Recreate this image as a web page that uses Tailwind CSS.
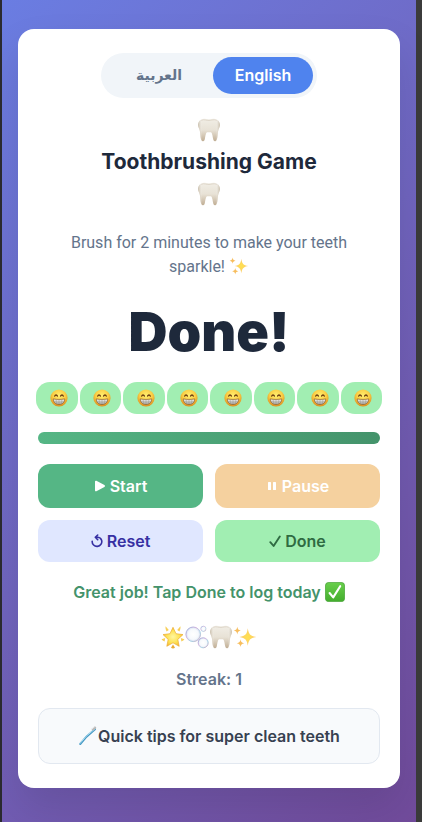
<!DOCTYPE html>
<html lang="en">
<head>
<meta charset="utf-8">
<meta name="viewport" content="width=device-width, initial-scale=1">
<title>Toothbrushing Game</title>
<script src="https://cdn.jsdelivr.net/npm/@tailwindcss/browser@4"></script>
</head>
<body class="min-h-screen bg-[#3b3b3b] font-['Inter','Noto_Sans',sans-serif] text-base text-[#1e293b]">
<svg class="absolute size-0" aria-hidden="true">
  <defs>
    <linearGradient id="gTooth" x1="0" y1="0" x2="0" y2="1"><stop offset="0" stop-color="#f1eee6"/><stop offset=".5" stop-color="#e8e2d6"/><stop offset="1" stop-color="#c0ad93"/></linearGradient>
    <linearGradient id="gToothEdge" x1="0" y1="0" x2="1" y2="0"><stop offset="0" stop-color="#b5a78f" stop-opacity=".75"/><stop offset=".2" stop-color="#fff" stop-opacity="0"/><stop offset=".8" stop-color="#fff" stop-opacity="0"/><stop offset="1" stop-color="#b5a78f" stop-opacity=".75"/></linearGradient>
    <radialGradient id="gFace" cx=".5" cy=".35" r=".65"><stop offset="0" stop-color="#ffee70"/><stop offset=".55" stop-color="#fbcf45"/><stop offset="1" stop-color="#dc8a1c"/></radialGradient>
    <linearGradient id="gTeeth" x1="0" y1="0" x2="0" y2="1"><stop offset="0" stop-color="#f4f4f4"/><stop offset="1" stop-color="#a9a6a0"/></linearGradient>
    <radialGradient id="gStar" cx=".5" cy=".5" r=".55"><stop offset="0" stop-color="#fff6a0"/><stop offset=".6" stop-color="#fde152"/><stop offset="1" stop-color="#f2b02e"/></radialGradient>
    <radialGradient id="gSpark" cx=".5" cy=".5" r=".5"><stop offset="0" stop-color="#ffe24e"/><stop offset="1" stop-color="#fbc86f"/></radialGradient>
    <radialGradient id="gBubble" cx=".5" cy=".5" r=".5"><stop offset="0" stop-color="#fff"/><stop offset=".7" stop-color="#f6f9fc"/><stop offset=".9" stop-color="#dfe5f3"/><stop offset="1" stop-color="#c8d4ea"/></radialGradient>
    <linearGradient id="gRing" x1="0" y1="0" x2="1" y2="1"><stop offset="0" stop-color="#90aeda"/><stop offset=".4" stop-color="#d7b3dd"/><stop offset=".65" stop-color="#a5d7e6"/><stop offset="1" stop-color="#d79bb8"/></linearGradient>
    <linearGradient id="gCheck" x1="0" y1="0" x2="0" y2="1"><stop offset="0" stop-color="#69cf4c"/><stop offset="1" stop-color="#43ad2d"/></linearGradient>
    <symbol id="tooth" viewBox="0 0 24 24">
      <path fill="url(#gTooth)" d="M6 .9C8.300.4 10 1.300 12 1.300S15.700.4 18 .9c3.100.6 5 2.900 4.900 6.100-.1 2.500-1.500 4.200-1.900 6.700-.5 3.100-.4 8.900-2.600 9.600-1.500.4-2-1-2.300-2.500-.5-2.700-1-6.100-2.200-6.500-.7-.3-1.400-.1-1.900-.1s-1.200-.2-1.900.1c-1.200.4-1.700 3.800-2.200 6.500-.3 1.500-.8 2.900-2.300 2.500C3.400 22.600 3.500 16.800 3 13.700 2.600 11.200 1.200 9.500 1.100 7 1 3.800 2.900 1.500 6 .9Z"/>
      <path fill="url(#gToothEdge)" d="M6 .9C8.300.4 10 1.300 12 1.300S15.700.4 18 .9c3.100.6 5 2.900 4.900 6.100-.1 2.500-1.500 4.200-1.900 6.700-.5 3.100-.4 8.900-2.600 9.600-1.500.4-2-1-2.300-2.500-.5-2.700-1-6.100-2.200-6.500-.7-.3-1.400-.1-1.900-.1s-1.200-.2-1.900.1c-1.200.4-1.700 3.800-2.200 6.500-.3 1.500-.8 2.900-2.300 2.500C3.400 22.600 3.500 16.800 3 13.700 2.600 11.200 1.200 9.500 1.100 7 1 3.800 2.900 1.500 6 .9Z"/>
      <path fill="none" stroke="#d8cfc0" stroke-width=".7" stroke-linecap="round" d="M4.500 2.200C7 1 9.500 2.600 12 2.500s5-1.500 7.500-.3"/>
    </symbol>
    <symbol id="grin" viewBox="0 0 18 18">
      <circle cx="9" cy="9" r="8.600" fill="url(#gFace)"/>
      <path fill="none" stroke="#6b3d12" stroke-width="1.300" stroke-linecap="round" d="M4.700 7.100c.5-1.500 2.100-1.500 2.700 0M10.600 7.100c.6-1.500 2.200-1.500 2.700 0"/>
      <path fill="url(#gTeeth)" stroke="#8d5b24" stroke-width=".7" d="M3.300 9.900c3.800.7 7.600.7 11.400 0 .2 3.400-2.400 5.600-5.700 5.600s-5.900-2.200-5.700-5.600Z"/>
      <path fill="none" stroke="#8e8a82" stroke-width=".4" d="M3.900 12.600c3.400.6 6.800.6 10.200 0M6.200 10.300l.3 4.500M9 10.500v5M11.800 10.300l-.3 4.500"/>
    </symbol>
    <symbol id="sparkles" viewBox="0 0 24 24">
      <path fill="url(#gSpark)" d="M14.800 3.200c.9 6 2.300 7.700 8.400 8.800-6.100 1.100-7.500 2.800-8.400 8.800-.9-6-2.300-7.700-8.400-8.800 6.100-1.100 7.500-2.800 8.400-8.800Z"/>
      <path fill="#f7bd5d" d="M4.300 1.800c.4 2.500 1.100 3.300 3.500 3.800-2.400.5-3.100 1.300-3.500 3.800C3.900 6.900 3.200 6.100.8 5.600c2.400-.5 3.100-1.300 3.500-3.800ZM7.500 14.300c.4 2.600 1.100 3.400 3.700 3.900-2.600.5-3.300 1.300-3.700 3.900-.4-2.600-1.100-3.400-3.700-3.900 2.600-.5 3.300-1.300 3.700-3.900Z"/>
    </symbol>
    <symbol id="star" viewBox="0 0 24 24">
      <path fill="url(#gStar)" stroke="#edae34" stroke-width=".7" stroke-linejoin="round" d="m12 2.300 3 6.400 7 .9-5.200 4.800 1.400 6.900-6.200-3.500-6.200 3.500 1.400-6.900L2 9.600l7-.9 3-6.400Z"/>
      <path fill="#f7cf58" d="M4.600 1.300 7.800 5 5.600 6.600C4.800 5 4.200 3.100 4.600 1.300ZM19.400 1.300 16.200 5l2.200 1.600c.8-1.600 1.400-3.500 1-5.300ZM.6 14.300l3.600-1.200-.6 3.400c-1.300-.4-2.500-1.100-3-2.200ZM23.400 14.300l-3.600-1.200.6 3.400c1.300-.4 2.500-1.100 3-2.200Z"/>
      <path fill="#e9aa35" d="m12 19.600 2 3.200c-1.200.8-2.800.8-4 0l2-3.200Z"/>
    </symbol>
    <symbol id="bubbles" viewBox="0 0 24 24">
      <g fill="url(#gBubble)" stroke="url(#gRing)">
        <circle cx="8.200" cy="9.300" r="7.300" stroke-width="1"/>
        <circle cx="18.200" cy="17.800" r="5" stroke-width="1"/>
        <circle cx="18.400" cy="3.800" r="2.600" stroke-width=".7"/>
      </g>
    </symbol>
    <symbol id="brush" viewBox="0 0 20 20">
      <path stroke="#4497c3" stroke-width="2" stroke-linecap="round" d="M2.200 18 8.500 10.700 17 3.200"/>
      <path fill="none" stroke="#a9ddf0" stroke-width="1" stroke-linecap="round" d="M2 17.500 8.300 10.200 17 2.800"/>
      <path stroke="#b8b8b8" stroke-width="2.400" d="m14.200 3.900 3.500-2.900"/>
      <path stroke="#e8e8e8" stroke-width="1" d="m13.500 3.300 3.500-2.900"/>
    </symbol>
    <symbol id="checkbox" viewBox="0 0 20 20">
      <rect x=".4" y=".4" width="19.200" height="19.200" rx="3.400" fill="url(#gCheck)" stroke="#4aa53a" stroke-width=".8"/>
      <path fill="none" stroke="#fff" stroke-width="2.100" stroke-linecap="round" stroke-linejoin="round" d="m4.600 11 3.600 4.400 7-11.200"/>
    </symbol>
  </defs>
</svg>

<div class="ml-0.5 mr-1.5 min-h-screen bg-linear-135 from-[#6a7de2] to-[#714b9b] px-4 pt-[29px] pb-8 shadow-[-2px_0_0_#2b2b30]">
  <main class="flex flex-col items-center rounded-2xl bg-white px-5 py-6 text-center shadow-[0_20px_40px_rgba(0,0,0,0.1)]">

    <div class="flex rounded-full bg-[#f1f5f9] p-1 leading-[21px] font-semibold" role="group" aria-label="Language">
      <button type="button" lang="ar" class="w-27 rounded-full py-2 font-['DejaVu_Sans',sans-serif] text-sm leading-[21px] text-[#64748b]">العربية</button>
      <button type="button" aria-pressed="true" class="w-25 rounded-full bg-[#4f83ee] py-2 text-white">English</button>
    </div>

    <h1 class="mt-5 flex flex-col items-center gap-2 text-[21px] leading-6 font-bold">
      <svg class="size-6" aria-hidden="true"><use href="#tooth"/></svg>
      <span>Toothbrushing Game</span>
      <svg class="size-6" aria-hidden="true"><use href="#tooth"/></svg>
    </h1>

    <p class="mt-[25px] px-5 font-['Roboto','Inter',sans-serif] leading-6 text-[#64748b]">Brush for 2 minutes to make your teeth sparkle! <svg class="inline size-5 align-[-4px]" aria-hidden="true"><use href="#sparkles"/></svg></p>

    <div class="mt-[25px] text-[54px] leading-14 font-black" role="timer">Done!</div>

    <ul class="-mx-0.5 mt-[22px] grid grid-cols-8 gap-0.5 self-stretch" aria-label="Brushing steps">
      <li class="flex h-8 items-center justify-center rounded-[14px] bg-[#a1eeb2] pl-1"><svg class="size-[18px]"><use href="#grin"/></svg></li>
      <li class="flex h-8 items-center justify-center rounded-[14px] bg-[#a1eeb2] pl-1"><svg class="size-[18px]"><use href="#grin"/></svg></li>
      <li class="flex h-8 items-center justify-center rounded-[14px] bg-[#a1eeb2] pl-1"><svg class="size-[18px]"><use href="#grin"/></svg></li>
      <li class="flex h-8 items-center justify-center rounded-[14px] bg-[#a1eeb2] pl-1"><svg class="size-[18px]"><use href="#grin"/></svg></li>
      <li class="flex h-8 items-center justify-center rounded-[14px] bg-[#a1eeb2] pl-1"><svg class="size-[18px]"><use href="#grin"/></svg></li>
      <li class="flex h-8 items-center justify-center rounded-[14px] bg-[#a1eeb2] pl-1"><svg class="size-[18px]"><use href="#grin"/></svg></li>
      <li class="flex h-8 items-center justify-center rounded-[14px] bg-[#a1eeb2] pl-1"><svg class="size-[18px]"><use href="#grin"/></svg></li>
      <li class="flex h-8 items-center justify-center rounded-[14px] bg-[#a1eeb2] pl-1"><svg class="size-[18px]"><use href="#grin"/></svg></li>
    </ul>

    <div class="mt-[18px] h-3 self-stretch rounded-full bg-linear-90 from-[#55b685] to-[#44936b]" role="progressbar" aria-label="Brushing progress" aria-valuenow="100" aria-valuemin="0" aria-valuemax="100"></div>

    <div class="mt-5 grid grid-cols-2 gap-3 self-stretch leading-6 font-semibold">
      <button type="button" class="flex h-11 items-center justify-center gap-1 rounded-xl bg-[#55b685] text-white">
        <svg class="size-3" viewBox="0 0 12 12" fill="currentColor" aria-hidden="true"><path d="M1 1.600C1 .8 1.700.5 2.400.8l8 4.200c.8.400.8 1.500 0 1.900l-8 4.300C1.700 11.500 1 11.200 1 10.400V1.600Z"/></svg>Start</button>
      <button type="button" class="flex h-11 items-center justify-center gap-1 rounded-xl bg-[#f5d19f] text-white">
        <svg class="size-3" viewBox="0 0 12 12" fill="currentColor" aria-hidden="true"><rect x="2" y="2" width="3" height="8" rx=".5"/><rect x="7" y="2" width="3" height="8" rx=".5"/></svg>Pause</button>
      <button type="button" class="flex h-[42px] items-center justify-center gap-1 rounded-xl bg-[#e0e7ff] text-[#3730a3]">
        <svg class="h-3.5 w-3" viewBox="0 0 12 14" fill="none" stroke="currentColor" stroke-width="1.600" stroke-linecap="round" stroke-linejoin="round" aria-hidden="true"><path d="M1.200 7.200a4.800 4.800 0 1 0 9.400-.9C10 4.300 8.300 3.300 6.300 3.300H4.500M6.700 1 4.300 3.300l2.400 2.400"/></svg>Reset</button>
      <button type="button" class="flex h-[42px] items-center justify-center gap-1 rounded-xl bg-[#a1eeb2] text-[#2f6b42]">
        <svg class="h-3.5 w-3" viewBox="0 0 12 14" fill="none" stroke="currentColor" stroke-width="1.900" stroke-linecap="round" stroke-linejoin="round" aria-hidden="true"><path d="m1.300 8.200 3.300 3.800L10.800 2.500"/></svg>Done</button>
    </div>

    <p class="mt-[18px] flex items-center gap-1 leading-6 font-semibold text-[#44936b]">Great job! Tap Done to log today <svg class="size-5" aria-hidden="true"><use href="#checkbox"/></svg></p>

    <div class="mt-[21px] flex h-6" aria-hidden="true">
      <svg class="size-6"><use href="#star"/></svg>
      <svg class="size-6"><use href="#bubbles"/></svg>
      <svg class="size-6"><use href="#tooth"/></svg>
      <svg class="size-6"><use href="#sparkles"/></svg>
    </div>

    <p class="mt-[18px] leading-6 font-semibold text-[#64748b]">Streak: 1</p>

    <button type="button" class="mt-[17px] flex h-14 items-center justify-center self-stretch rounded-xl border border-[#e2e8f0] bg-[#f8fafc] leading-6 font-semibold text-[#374151]"><svg class="size-5" fill="none" aria-hidden="true"><use href="#brush"/></svg>Quick tips for super clean teeth</button>
  </main>
</div>
</body>
</html>
